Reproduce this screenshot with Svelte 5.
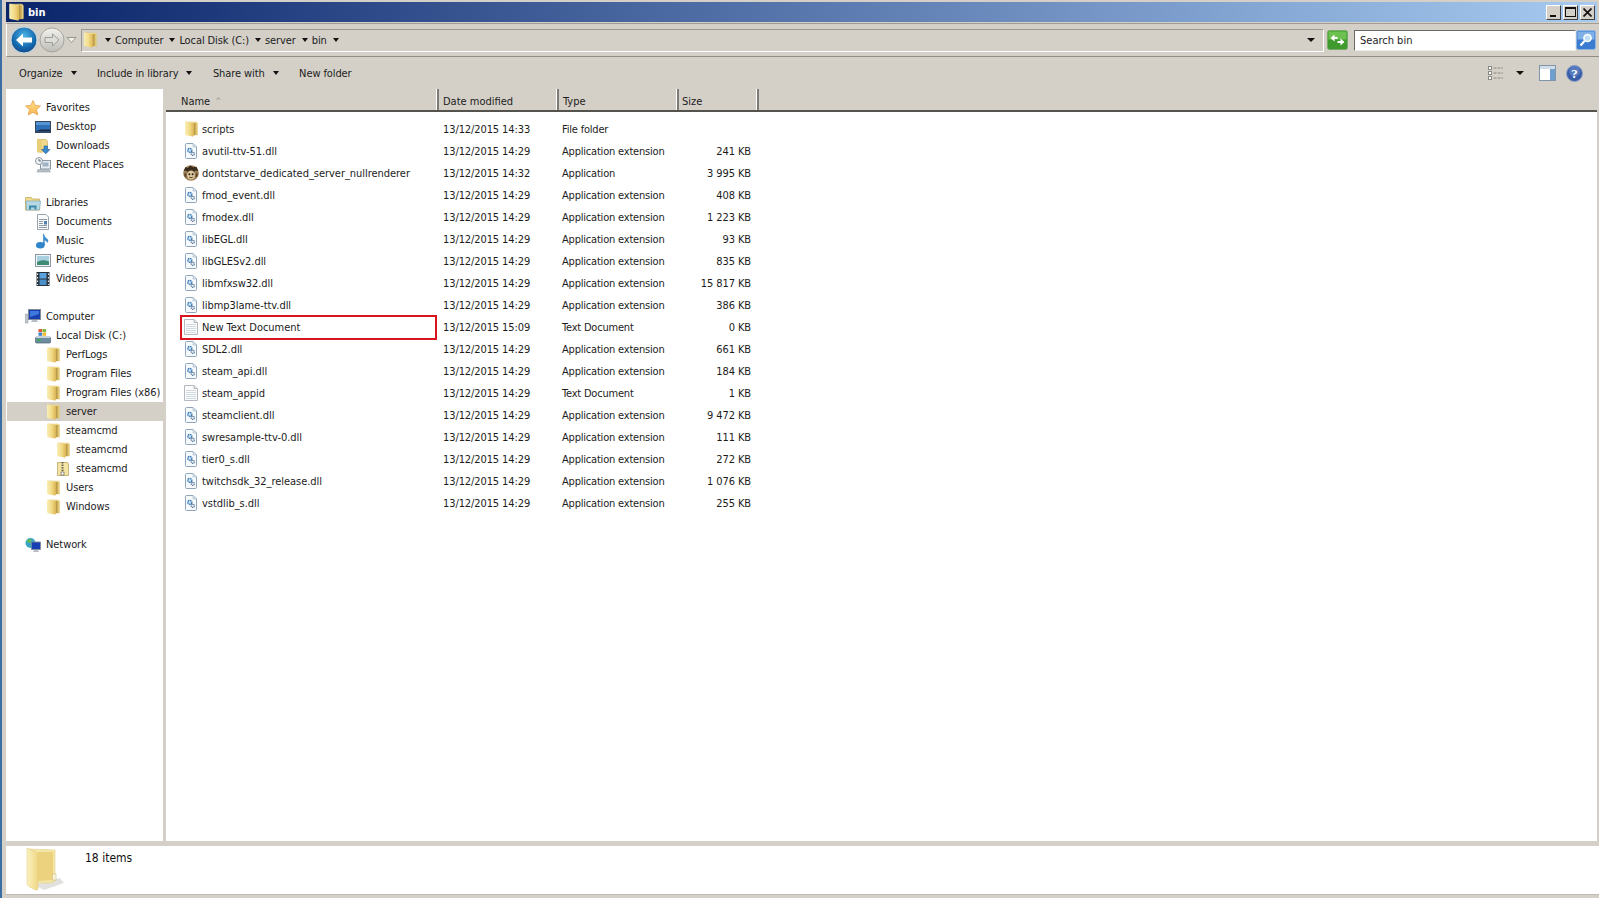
<script>
  const files = [
    ['scripts','folder','13/12/2015 14:33','File folder',''],
    ['avutil-ttv-51.dll','dll','13/12/2015 14:29','Application extension','241 KB'],
    ['dontstarve_dedicated_server_nullrenderer','app','13/12/2015 14:32','Application','3 995 KB'],
    ['fmod_event.dll','dll','13/12/2015 14:29','Application extension','408 KB'],
    ['fmodex.dll','dll','13/12/2015 14:29','Application extension','1 223 KB'],
    ['libEGL.dll','dll','13/12/2015 14:29','Application extension','93 KB'],
    ['libGLESv2.dll','dll','13/12/2015 14:29','Application extension','835 KB'],
    ['libmfxsw32.dll','dll','13/12/2015 14:29','Application extension','15 817 KB'],
    ['libmp3lame-ttv.dll','dll','13/12/2015 14:29','Application extension','386 KB'],
    ['New Text Document','txt','13/12/2015 15:09','Text Document','0 KB'],
    ['SDL2.dll','dll','13/12/2015 14:29','Application extension','661 KB'],
    ['steam_api.dll','dll','13/12/2015 14:29','Application extension','184 KB'],
    ['steam_appid','txt','13/12/2015 14:29','Text Document','1 KB'],
    ['steamclient.dll','dll','13/12/2015 14:29','Application extension','9 472 KB'],
    ['swresample-ttv-0.dll','dll','13/12/2015 14:29','Application extension','111 KB'],
    ['tier0_s.dll','dll','13/12/2015 14:29','Application extension','272 KB'],
    ['twitchsdk_32_release.dll','dll','13/12/2015 14:29','Application extension','1 076 KB'],
    ['vstdlib_s.dll','dll','13/12/2015 14:29','Application extension','255 KB']
  ];
  const nav = [
    [{t:'Favorites',i:'star',l:0},{t:'Desktop',i:'desktop',l:1},{t:'Downloads',i:'downloads',l:1},{t:'Recent Places',i:'recent',l:1}],
    [{t:'Libraries',i:'library',l:0},{t:'Documents',i:'documents',l:1},{t:'Music',i:'music',l:1},{t:'Pictures',i:'pictures',l:1},{t:'Videos',i:'videos',l:1}],
    [{t:'Computer',i:'computer',l:0},{t:'Local Disk (C:)',i:'disk',l:1},{t:'PerfLogs',i:'folder',l:2},{t:'Program Files',i:'folder',l:2},{t:'Program Files (x86)',i:'folder',l:2},{t:'server',i:'folder',l:2,sel:true},{t:'steamcmd',i:'folder',l:2},{t:'steamcmd',i:'folder',l:3},{t:'steamcmd',i:'zip',l:3},{t:'Users',i:'folder',l:2},{t:'Windows',i:'folder',l:2}],
    [{t:'Network',i:'network',l:0}]
  ];
  const crumbs = ['Computer','Local Disk (C:)','server','bin'];
  const tools = [['Organize',true],['Include in library',true],['Share with',true],['New folder',false]];
</script>

{#snippet arrow()}<span class="arrow"></span>{/snippet}

{#snippet folder(w, h)}
  <svg width={w} height={h} viewBox="0 0 16 16">
    <path d="M3 1 L13.5 1 L14.5 2.5 L14.5 14 L8 14 Z" fill="#f3df95" stroke="#d8bd66" stroke-width=".5"/>
    <path d="M10.5 2 H13.8 V14 H10.5 Z" fill="url(#foldr)"/>
    <path d="M2 1 Q2 .4 3 .6 L9.5 2.2 Q10.8 2.6 10.8 3.6 V14.5 Q10.8 15.8 9.5 15.5 L3 14.2 Q2 14 2 13 Z" fill="url(#fold)"/>
  </svg>
{/snippet}

{#snippet bigFolder()}
  <svg width="42" height="44" viewBox="0 0 42 44">
    <path d="M8 38 L34 31 L38 36 L18 43 Z" fill="#c9c9c5" opacity=".55"/>
    <path d="M2 2 L29 3 L29 34 L26 36 L10 36 Z" fill="#f4e6a4" stroke="#e3d08a" stroke-width=".6"/>
    <path d="M12 5 L27 5 L27 33 L12 34 Z" fill="#ecd27f"/>
    <path d="M1 1 L10 5 Q12 6 12 8 V41 Q12 43.5 9.5 43 L3 39.5 Q1 38.5 1 36 Z" fill="url(#foldbig)" stroke="#ddc57c" stroke-width=".5"/>
    <rect x="26.5" y="27" width="3.5" height="6" fill="#faf6dc" stroke="#c8b36e" stroke-width=".5"/>
  </svg>
{/snippet}

{#snippet dll()}
  <svg width="16" height="16" viewBox="0 0 16 16">
    <path d="M2.5 1.5 Q2.5 .5 3.5 .5 H10 L13.5 4 V14.5 Q13.5 15.5 12.5 15.5 H3.5 Q2.5 15.5 2.5 14.5 Z" fill="#f7fafd" stroke="#8fa5bb"/>
    <path d="M10 .5 V4 H13.5 Z" fill="#dfe8f2" stroke="#a9bacb" stroke-width=".7"/>
    <circle cx="6.8" cy="7.4" r="2" fill="#cfe2f3" stroke="#3f7fb8" stroke-width="1.4" stroke-dasharray="1.6 .5"/>
    <circle cx="9.8" cy="10.8" r="1.6" fill="#e8eef4" stroke="#5d7a96" stroke-width="1.2" stroke-dasharray="1.3 .5"/>
  </svg>
{/snippet}

{#snippet txt()}
  <svg width="16" height="16" viewBox="0 0 16 16">
    <path d="M1.5 .5 H11 L14.5 3.5 V15.5 H1.5 Z" fill="#fbfbfb" stroke="#b5b8bc"/>
    <path d="M11 .5 V3.5 H14.5" fill="#e6e8ea" stroke="#b5b8bc"/>
    <path d="M3 5.5H13M3 7.5H13M3 9.5H13M3 11.5H13M3 13.5H13" stroke="#d0dae3"/>
  </svg>
{/snippet}

{#snippet app()}
  <svg width="16" height="16" viewBox="0 0 16 16">
    <circle cx="8" cy="8" r="7.8" fill="#9b7f57"/>
    <path d="M.8 6 L2.5 2 L5 3 L7 .5 L10 2.2 L13.5 1.8 L15.2 6 L12.5 5.5 L11 7 L5 7 L3 5.5 Z" fill="#3a2b1c"/>
    <ellipse cx="8" cy="10" rx="3.9" ry="4.6" fill="#dcc79e"/>
    <circle cx="6.4" cy="9.2" r="1" fill="#2a1e12"/><circle cx="9.6" cy="9.2" r="1" fill="#2a1e12"/>
    <path d="M6.2 12.2 Q8 13.2 9.8 12.2" stroke="#5a4028" fill="none"/>
    <path d="M1 9 L3 8 L3.5 12 L2 12 Z M15 9 L13 8 L12.5 12 L14 12 Z" fill="#5b4429"/>
  </svg>
{/snippet}

{#snippet navIcon(i)}
  {#if i==='folder'}{@render folder(16,16)}
  {:else}
  <svg width="16" height="16" viewBox="0 0 16 16">
    {#if i==='star'}
      <path d="M8 .5 L10.2 5.4 L15.5 6 L11.5 9.5 L12.7 15 L8 12.2 L3.3 15 L4.5 9.5 L.5 6 L5.8 5.4 Z" fill="url(#starg)" stroke="#e3a248" stroke-width=".8"/>
    {:else if i==='desktop'}
      <rect x=".5" y="2.5" width="15" height="11" fill="#2f6fb6" stroke="#37465c"/>
      <path d="M1 12.6 H15 V10.6 H6 L1 12 Z" fill="#1c2a3f"/>
      <path d="M1 3 H15 V6 H1 Z" fill="#5595d4"/>
    {:else if i==='downloads'}
      <path d="M2.5 1.5 H11 L12.5 3 V14 H2.5 Z" fill="#f0d98c" stroke="#cdb060" stroke-width=".7"/>
      <path d="M2 1 L7 2.5 V15 L2 14 Z" fill="#e9cf7a"/>
      <path d="M9 8 H12.5 V11.5 H15 L10.8 15.8 L6.5 11.5 H9 Z" fill="#3a8ad0" stroke="#1d5c9c" stroke-width=".6"/>
    {:else if i==='recent'}
      <rect x="5.5" y="3.5" width="10" height="8.5" fill="#e6ecf2" stroke="#8d98a5"/>
      <rect x="7.5" y="5.5" width="6" height="4" fill="#9fb3c6"/>
      <path d="M3 12.5 H14 L15.5 15 H2 Z" fill="#b8bfc7" stroke="#8d98a5" stroke-width=".5"/>
      <circle cx="4" cy="4" r="3.5" fill="#f1f3f5" stroke="#8d98a5"/>
      <path d="M4 2 V4 H6" stroke="#606a75" fill="none"/>
    {:else if i==='library'}
      <path d="M.5 2.5 H6.5 L7.5 4 H14.5 V15 H.5 Z" fill="#f1dc8b" stroke="#c2ab61" stroke-width=".8"/>
      <path d="M1 6 H15.5 L14.5 15 H1.5 Z" fill="#b6d9e5" stroke="#7fa9b8" stroke-width=".7"/>
      <path d="M4 14.5 V10.5 H11.5 V14.5 H9.5 V12.5 H6 V14.5 Z" fill="#3d89a8"/>
    {:else if i==='documents'}
      <path d="M2.5 .5 H11 L13.5 3 V15.5 H2.5 Z" fill="#fafbfc" stroke="#9aa3ad"/>
      <path d="M4 5.5H12M4 7.5H8M4 9.5H8M4 11.5H12M4 13.5H12" stroke="#8d98a5"/>
      <rect x="9" y="7" width="3" height="3.5" fill="#4d7fb5"/>
    {:else if i==='music'}
      <ellipse cx="5.3" cy="12.3" rx="4.3" ry="3.2" fill="#2f86cc"/>
      <path d="M8.4 12 V.8 Q9.6 5 13 7 L12.6 9.4 Q10.5 7.5 9.5 6.5 V12 Z" fill="#3a90d6" stroke="#1f6dad" stroke-width=".4"/>
    {:else if i==='pictures'}
      <rect x=".5" y="2.5" width="15" height="12" fill="#f2f4f5" stroke="#8d98a5"/>
      <rect x="2" y="4" width="12" height="9" fill="#a8d0de"/>
      <path d="M2 10 Q7 7 14 9.5 V13 H2 Z" fill="#3f8a75"/>
    {:else if i==='videos'}
      <rect x="1.5" y="1" width="13" height="14" fill="#28323c"/>
      <rect x="4.5" y="2" width="7" height="5.5" fill="#5ba3dc"/>
      <rect x="4.5" y="8.5" width="7" height="5.5" fill="#4a8fc7"/>
      <path d="M2.5 2.5v1.5M2.5 6v1.5M2.5 9.5v1.5M2.5 13v1M13.5 2.5v1.5M13.5 6v1.5M13.5 9.5v1.5M13.5 13v1" stroke="#e6e9ec" stroke-width="1.2"/>
    {:else if i==='computer'}
      <rect x="0" y="5" width="3" height="9" fill="#c2c8ce" stroke="#8d98a5" stroke-width=".5"/>
      <rect x="3.5" y=".5" width="12" height="10" fill="#1a3fb0" stroke="#7f8b99"/>
      <path d="M5 2 H14 V5 L5 8 Z" fill="#3d78dc"/>
      <path d="M7 11 H12 L13 13 H6 Z" fill="#b8bfc7"/>
    {:else if i==='disk'}
      <rect x=".5" y="9" width="15" height="6" rx="1" fill="#6f8ba0" stroke="#4f6474" stroke-width=".7"/>
      <path d="M1.5 8 H14.5 L15.5 10 H.5 Z" fill="#c5d2da"/>
      <rect x="2" y="11.5" width="4" height="1.5" fill="#2bb34a"/>
      <rect x="3.5" y="1" width="3.6" height="3.2" fill="#df5a2f"/><rect x="7.5" y="1" width="3.6" height="3.2" fill="#7cb83f"/>
      <rect x="3.5" y="4.6" width="3.6" height="3.2" fill="#3d85d0"/><rect x="7.5" y="4.6" width="3.6" height="3.2" fill="#f1bb2f"/>
    {:else if i==='zip'}
      <path d="M2.5 1.5 H12.5 L13.5 3 V14.5 H2.5 Z" fill="#f4e4a6" stroke="#b49b56" stroke-width=".7"/>
      <path d="M7.5 1 V13" stroke="#6d6455" stroke-width="2" stroke-dasharray="1.5 1"/>
      <rect x="6" y="11" width="3" height="3" fill="#fff" stroke="#6d6455" stroke-width=".7"/>
    {:else if i==='network'}
      <circle cx="5.5" cy="6" r="5" fill="#38a4c6"/>
      <path d="M2 3 Q5 1 7 3 L5 6 L2 5 Z" fill="#62ba5a"/>
      <rect x="6.5" y="5" width="9" height="7.5" fill="#163fb2" stroke="#7f8b99" stroke-width=".8"/>
      <path d="M9 13 H13 L14 15 H8 Z" fill="#b8bfc7"/>
    {/if}
  </svg>
  {/if}
{/snippet}

<svg class="defs" width="0" height="0">
  <defs>
    <linearGradient id="fold" x1="0" x2="1" y1="0" y2="0">
      <stop offset="0" stop-color="#f9eeb5"/><stop offset=".55" stop-color="#f2da85"/><stop offset="1" stop-color="#dcb554"/>
    </linearGradient>
    <linearGradient id="foldr" x1="0" x2="1" y1="0" y2="0">
      <stop offset="0" stop-color="#a98a3c"/><stop offset="1" stop-color="#e3c66f"/>
    </linearGradient>
    <linearGradient id="foldbig" x1="0" x2="1" y1="0" y2="0">
      <stop offset="0" stop-color="#fbf2bf"/><stop offset="1" stop-color="#f0d684"/>
    </linearGradient>
    <linearGradient id="starg" x1="0" x2="0" y1="0" y2="1">
      <stop offset="0" stop-color="#fde08a"/><stop offset="1" stop-color="#f9b552"/>
    </linearGradient>
    <radialGradient id="backg" cx=".5" cy=".35" r=".75">
      <stop offset="0" stop-color="#4ab6e8"/><stop offset=".6" stop-color="#1567ac"/><stop offset="1" stop-color="#0b3c78"/>
    </radialGradient>
    <linearGradient id="fwdg" x1="0" x2="0" y1="0" y2="1">
      <stop offset="0" stop-color="#f1f1ee"/><stop offset="1" stop-color="#bdbcb6"/>
    </linearGradient>
  </defs>
</svg>

<div class="window">
  <header class="title">
    <span class="title-icon">{@render folder(18,18)}</span>
    <span class="title-text">bin</span>
    <div class="winbtns">
      <button class="wb" aria-label="Minimize"><span class="min"></span></button>
      <button class="wb" aria-label="Maximize"><span class="max"></span></button>
      <button class="wb close" aria-label="Close">
        <svg width="9" height="9" viewBox="0 0 9 9"><path d="M.5 .5 L8.5 8.5 M8.5 .5 L.5 8.5" stroke="#111" stroke-width="1.7"/></svg>
      </button>
    </div>
  </header>

  <div class="navbar">
    <svg class="navbtn" width="28" height="28" viewBox="0 0 28 28" aria-label="Back">
      <circle cx="14" cy="14" r="13" fill="url(#backg)" stroke="#c9d6df"/>
      <path d="M6 14 L13 7.5 V11.5 H22 V16.5 H13 V20.5 Z" fill="#fff"/>
    </svg>
    <svg class="navbtn fwd" width="26" height="26" viewBox="0 0 26 26" aria-label="Forward">
      <circle cx="13" cy="13" r="12" fill="url(#fwdg)" stroke="#a5a59e"/>
      <path d="M20 13 L13.5 7 V10.5 H6 V15.5 H13.5 V19 Z" fill="#dcdcd8" stroke="#9d9d97"/>
    </svg>
    <svg class="chev" width="11" height="8" viewBox="0 0 11 8"><path d="M1 1.5 H10 L5.5 6.5 Z" fill="#f2f1ec" stroke="#95958f"/></svg>
    <div class="address">
      <span class="addr-icon">{@render folder(16,18)}</span>
      {#each crumbs as c}
        {@render arrow()}<span class="crumb">{c}</span>
      {/each}
      {@render arrow()}
      <span class="spacer"></span>
      <span class="addr-drop">{@render arrow()}</span>
    </div>
    <svg class="refresh" width="21" height="20" viewBox="0 0 21 20" aria-label="Refresh">
      <rect x=".5" y=".5" width="20" height="19" rx="2" fill="#3e9a2d" stroke="#7aa96c"/>
      <rect x="1.5" y="1.5" width="18" height="8" fill="#6cc04f"/>
      <path d="M3.5 8 L7.5 4.5 V7 H10.5 V9 H7.5 V11.5 Z M17.5 12 L13.5 15.5 V13 H10.5 V11 H13.5 V8.5 Z" fill="#fff"/>
    </svg>
    <div class="search">Search bin</div>
    <svg class="searchbtn" width="20" height="20" viewBox="0 0 20 20" aria-label="Search">
      <rect x=".5" y=".5" width="19" height="19" rx="2" fill="#3b7cd0" stroke="#8fb4df"/>
      <rect x="1.5" y="1.5" width="17" height="8" fill="#7fb0e8"/>
      <circle cx="11.5" cy="8" r="3.6" fill="#bfe0f7" stroke="#fff" stroke-width="1.5"/>
      <path d="M8.5 11 L4.5 15.5" stroke="#fff" stroke-width="2.2"/>
    </svg>
  </div>

  <div class="toolbar">
    {#each tools as [label, hasArrow]}
      <span class="tool">{label}{#if hasArrow}{@render arrow()}{/if}</span>
    {/each}
    <span class="spacer"></span>
    <svg class="tb-views" width="15" height="14" viewBox="0 0 15 14">
      <rect x=".5" y=".5" width="3" height="3" fill="#fff" stroke="#8a8a84"/><rect x=".5" y="5.5" width="3" height="3" fill="#fff" stroke="#8a8a84"/><rect x=".5" y="10.5" width="3" height="3" fill="#fff" stroke="#8a8a84"/>
      <path d="M5.5 2H15M5.5 7H15M5.5 12H15" stroke="#8a8a84" stroke-dasharray="3 1"/>
    </svg>
    <span class="tb-arrow">{@render arrow()}</span>
    <svg class="tb-pane" width="17" height="16" viewBox="0 0 17 16">
      <rect x=".5" y=".5" width="16" height="15" fill="#fff" stroke="#7f95ab"/>
      <rect x="1" y="1" width="15" height="3" fill="#d3dde6"/>
      <rect x="11" y="4" width="5" height="11" fill="#6da0ce"/>
    </svg>
    <svg class="tb-help" width="17" height="17" viewBox="0 0 17 17">
      <circle cx="8.5" cy="8.5" r="8" fill="#3a5ea8" stroke="#8fa3c8"/>
      <circle cx="8.5" cy="6" r="5.5" fill="#6a8ccc" opacity=".6"/>
      <text x="8.5" y="13" text-anchor="middle" class="help-q">?</text>
    </svg>
  </div>

  <div class="main">
    <nav class="tree">
      {#each nav as group}
        <div class="group">
          {#each group as n}
            <div class="node l{n.l}" class:sel={n.sel}>
              <span class="ico">{@render navIcon(n.i)}</span><span>{n.t}</span>
            </div>
          {/each}
        </div>
      {/each}
    </nav>
    <div class="content">
      <div class="thead">
        <div class="th c-name">Name <span class="sort">^</span></div>
        <div class="th c-date">Date modified</div>
        <div class="th c-type">Type</div>
        <div class="th c-size">Size</div>
      </div>
      <div class="rows">
        {#each files as f}
          <div class="row">
            <div class="td c-name">
              <span class="ico">
                {#if f[1]==='folder'}{@render folder(16,16)}
                {:else if f[1]==='dll'}{@render dll()}
                {:else if f[1]==='txt'}{@render txt()}
                {:else}{@render app()}{/if}
              </span>
              <span>{f[0]}</span>
              {#if f[0]==='New Text Document'}<span class="mark"></span>{/if}
            </div>
            <div class="td c-date">{f[2]}</div>
            <div class="td c-type">{f[3]}</div>
            <div class="td c-size">{f[4]}</div>
          </div>
        {/each}
      </div>
    </div>
  </div>

  <footer class="status">
    <span class="status-icon">{@render bigFolder()}</span>
    <span class="status-text">18 items</span>
  </footer>
</div>

<style>
  :global(body) { margin: 0; background: #d4d0c8; overflow: hidden; }
  .defs { position: absolute; }
  .window {
    width: 1599px; height: 898px; box-sizing: border-box;
    display: flex; flex-direction: column;
    background: #d4d0c8;
    border-left: 2px solid #3a6ea5;
    padding: 2px 0 3px 4px;
    font-family: "DejaVu Sans Condensed", "DejaVu Sans", sans-serif;
    font-size: 11px; color: #1c1c1c;
  }
  svg { display: block; flex: none; }
  button { padding: 0; font: inherit; }

  .title {
    height: 20px; flex: none; display: flex; align-items: center;
    background: linear-gradient(90deg, #0a246a, #a6caf0);
    color: #fff; font-weight: bold; font-size: 11px;
    margin-right: 2px;
  }
  .title-icon { margin-left: 1px; }
  .title-text { margin-left: 3px; }
  .winbtns { margin-left: auto; display: flex; gap: 2px; margin-right: 2px; }
  .wb {
    width: 15px; height: 15px; background: #d4d0c8;
    border: 1px solid; border-color: #fff #404040 #404040 #fff;
    position: relative;
    display: flex; align-items: center; justify-content: center;
  }
  .min { position: absolute; left: 3px; bottom: 2px; width: 6px; height: 2px; background: #111; }
  .max { width: 9px; height: 7px; border: 1px solid #111; border-top-width: 2px; }

  .navbar {
    height: 34px; flex: none; margin-top: 1px; box-sizing: border-box;
    border-top: 1px solid #9e9c95; border-bottom: 1px solid #8f8d87; border-left: 1px solid #fff;
    display: flex; align-items: center; padding: 0 3px 0 3px;
  }
  .fwd { margin-left: 1px; }
  .chev { margin-left: 1px; margin-right: 4px; }
  .address {
    flex: 1; height: 23px; box-sizing: border-box; display: flex; align-items: center;
    border: 1px solid; border-color: #9a9891 #fff #fff #9a9891;
  }
  .addr-icon { margin-right: 7px; }
  .crumb { margin: 0 6px 0 4px; letter-spacing: -.1px; }
  .arrow {
    display: inline-block; width: 0; height: 0; flex: none;
    border-left: 3.5px solid transparent; border-right: 3.5px solid transparent; border-top: 4px solid #111;
  }
  .spacer { flex: 1; }
  .addr-drop { margin-right: 8px; display: flex; }
  .addr-drop .arrow { border-left-width: 4px; border-right-width: 4px; }
  .refresh { margin-left: 3px; }
  .search {
    width: 222px; height: 21px; box-sizing: border-box; background: #fff; margin-left: 6px;
    border: 1px solid; border-color: #6c6a65 #efeee9 #efeee9 #6c6a65;
    padding-left: 5px; line-height: 19px;
  }

  .toolbar {
    height: 32px; flex: none; display: flex; align-items: center; padding-left: 13px; padding-right: 16px;
    letter-spacing: -.1px;
  }
  .tool { display: inline-flex; align-items: center; gap: 8px; margin-right: 20.5px; }
  .tb-views { margin-left: 2px; }
  .tb-arrow { display: flex; margin: 0 15px 0 13px; }
  .tb-arrow .arrow { border-left-width: 4px; border-right-width: 4px; }
  .tb-help { margin-left: 10px; }
  .help-q { font: bold 13px "Liberation Serif", serif; fill: #fff; }

  .main { flex: 1; min-height: 0; display: flex; gap: 3px; }
  .tree {
    width: 157px; flex: none; background: #fff; padding-top: 9px; box-sizing: border-box;
    letter-spacing: -.08px;
  }
  .group { margin-bottom: 19px; }
  .node { height: 19px; display: flex; align-items: center; gap: 5px; white-space: nowrap; }
  .node.sel { background: #d4d0c8; margin-left: 1px; padding-left: 38px; }
  .l0 { padding-left: 19px; }
  .l1 { padding-left: 29px; }
  .l2 { padding-left: 39px; }
  .l3 { padding-left: 49px; }
  .ico { width: 16px; height: 16px; flex: none; display: block; }

  .content { flex: 1; background: #fff; min-width: 0; display: flex; flex-direction: column; margin-right: 2px; }
  .thead { height: 21px; flex: none; display: flex; border-bottom: 2px solid #55534e; background: #d4d0c8; }
  .th { box-sizing: border-box; height: 100%; padding-top: 3px; display: flex; align-items: center; border-right: 2px solid #7d7b75; box-shadow: inset -1px 0 #fff; }
  .c-name { width: 271px; padding-left: 15px; }
  .c-date { width: 120px; padding-left: 6px; }
  .c-type { width: 120px; padding-left: 6px; }
  .c-size { width: 80px; padding-left: 6px; }
  .th.c-name { width: 273px; }
  .th.c-date { padding-left: 4px; }
  .th.c-type { padding-left: 4px; }
  .th.c-size { padding-left: 3px; }
  .sort { color: #9a9891; font-size: 8px; margin-left: 5px; }
  .rows { padding-top: 6px; }
  .row { height: 22px; display: flex; align-items: center; }
  .td { box-sizing: border-box; white-space: nowrap; }
  .td.c-name { display: flex; align-items: center; gap: 3px; position: relative; height: 100%; padding-left: 17px; letter-spacing: -.04px; }
  .td.c-date { padding-left: 6px; letter-spacing: -.1px; }
  .td.c-type { padding-left: 5px; letter-spacing: -.2px; }
  .td.c-size { text-align: right; padding: 0 4px 0 0; width: 78px; letter-spacing: -.1px; }
  .mark {
    position: absolute; left: 14px; right: 0; top: -1px; bottom: -2px;
    border: 2px solid #d8141c; box-sizing: border-box;
  }

  .status {
    height: 48px; flex: none; margin-top: 5px; background: #fff; display: flex; align-items: flex-start;
    border-bottom: 1px solid #bcbab3;
  }
  .status-icon { margin: 1px 0 0 20px; }
  .status-text { margin: 5px 0 0 17px; font-size: 12px; color: #111; }
</style>
